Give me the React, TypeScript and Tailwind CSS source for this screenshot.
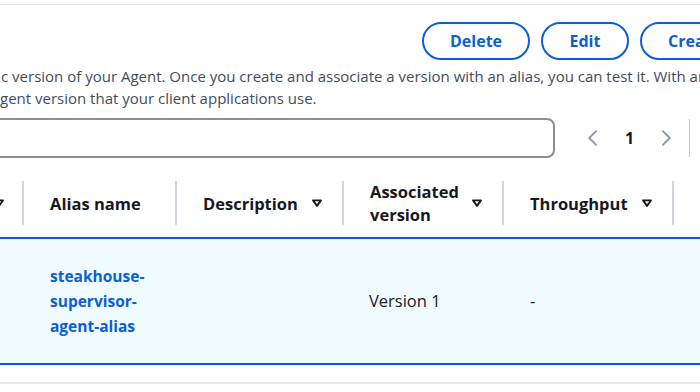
import { ReactNode } from 'react';

const BLUE = 'text-[#0a5fd6]';

function SortIcon({ className = '' }: { className?: string }) {
  return (
    <svg viewBox="0 0 16 16" className={`h-[14px] w-[14px] shrink-0 ${className}`} fill="none" stroke="#16191f" strokeWidth={2.2} strokeLinejoin="round">
      <path d="M3.5 5h9L8 11.5z" />
    </svg>
  );
}

function Chevron({ dir }: { dir: 'left' | 'right' }) {
  return (
    <svg viewBox="0 0 16 16" className="h-[20px] w-[20px]" fill="none" stroke="#8d99a8" strokeWidth={1.5} strokeLinecap="round" strokeLinejoin="round">
      <path d={dir === 'left' ? 'M10.5 2.5 5 8l5.5 5.5' : 'M5.5 2.5 11 8l-5.5 5.5'} />
    </svg>
  );
}

function Divider() {
  return <div className="h-[44px] w-[2px] shrink-0 bg-[#d1d5db]" />;
}

function HeaderCell({ width, sortable = true, children }: { width: string; sortable?: boolean; children: ReactNode }) {
  return (
    <div className={`flex ${width} shrink-0 items-center justify-between pl-[26px] pr-[18px]`}>
      <div className="text-[16.5px] font-bold leading-[23px] text-[#16191f]">{children}</div>
      {sortable && <SortIcon />}
    </div>
  );
}

function OutlineButton({ label, width }: { label: string; width: string }) {
  return (
    <button className={`h-[38px] ${width} shrink-0 rounded-full border-2 border-[#0a5fd6] bg-white px-[26px] text-[16px] font-bold ${BLUE}`}>
      {label}
    </button>
  );
}

export default function App() {
  return (
    <div className="h-[392px] w-[700px] overflow-hidden bg-white font-['Open_Sans',sans-serif]">
      <div className="h-[4px]" />
      <div className="h-px bg-[#e4e4e8]" />

      <div className="mt-[17px] flex gap-[11px] whitespace-nowrap pl-[422px]">
        <OutlineButton label="Delete" width="w-[108px]" />
        <OutlineButton label="Edit" width="w-[88px]" />
        <OutlineButton label="Create alias" width="w-auto" />
      </div>

      <div className="mt-[5px] whitespace-nowrap text-[15px] leading-[22px] text-[#414d5c]">
        <p className="pl-px">c version of your Agent. Once you create and associate a version with an alias, you can test it. With an alias, you can update the</p>
        <p>gent version that your client applications use.</p>
      </div>

      <div className="mt-[9px] flex h-[40px] items-center">
        <div className="ml-[-20px] h-[40px] w-[575px] shrink-0 rounded-lg border-2 border-[#8c8c94]" />
        <div className="ml-[28px] flex items-center">
          <Chevron dir="left" />
          <span className="mx-[22px] text-[16px] font-bold text-[#16191f]">1</span>
          <Chevron dir="right" />
        </div>
        <div className="ml-[13px] h-[38px] w-px bg-[#c6c6cd]" />
      </div>

      <div className="mt-[23px] flex h-[44px] items-center">
        <div className="flex w-[22px] shrink-0 items-center">
          <SortIcon className="ml-[-8px]" />
        </div>
        <Divider />
        <HeaderCell width="w-[151px]" sortable={false}>Alias name</HeaderCell>
        <Divider />
        <HeaderCell width="w-[165px]">Description</HeaderCell>
        <Divider />
        <HeaderCell width="w-[158px]">
          Associated
          <br />
          version
        </HeaderCell>
        <Divider />
        <HeaderCell width="w-[168px]">Throughput</HeaderCell>
        <Divider />
      </div>

      <div className="mt-[12px] flex h-[128px] items-center border-y-2 border-[#0a5fd6] bg-[#f0fbff]">
        <div className="w-[24px] shrink-0" />
        <div className="w-[153px] shrink-0 pl-[26px]">
          <a className={`block text-[15.5px] font-bold leading-[25px] ${BLUE}`}>
            steakhouse-
            <br />
            supervisor-
            <br />
            agent-alias
          </a>
        </div>
        <div className="w-[167px] shrink-0" />
        <div className="w-[160px] shrink-0 pl-[25px] text-[16.5px] text-[#16191f]">Version 1</div>
        <div className="w-[170px] shrink-0 pl-[26px] text-[16.5px] text-[#16191f]">-</div>
      </div>

      <div className="mt-[17px] h-[2px] bg-[#e6e6e8]" />
    </div>
  );
}
